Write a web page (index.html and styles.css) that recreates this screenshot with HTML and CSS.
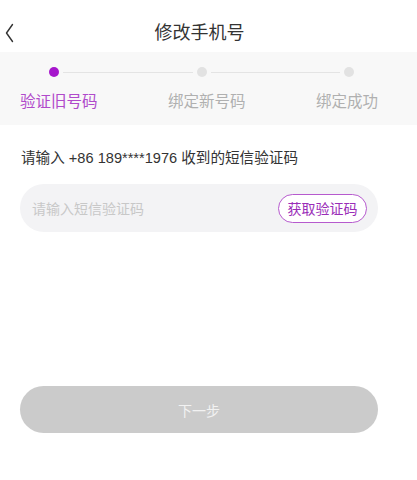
FILE: index.html
```html
<!DOCTYPE html>
<html lang="zh">
<head>
<meta charset="utf-8">
<title>修改手机号</title>
<link rel="stylesheet" href="styles.css">
</head>
<body>
<div class="page">
  <header class="nav">
    <span class="back">
      <svg width="9" height="20" viewBox="0 0 9 20"><polyline points="7.5,1.5 1.5,10 7.5,18.5" fill="none" stroke="#333" stroke-width="1.4" stroke-linecap="round" stroke-linejoin="round"/></svg>
    </span>
    <h1 class="title">修改手机号</h1>
    <span class="nav-spacer"></span>
  </header>
  <section class="steps">
    <div class="dots">
      <span class="dot active"></span>
      <span class="line"></span>
      <span class="dot"></span>
      <span class="line"></span>
      <span class="dot"></span>
    </div>
    <div class="labels">
      <span class="label active">验证旧号码</span>
      <span class="label">绑定新号码</span>
      <span class="label">绑定成功</span>
    </div>
  </section>
  <main class="content">
    <p class="hint">请输入 +86 189****1976 收到的短信验证码</p>
    <div class="field">
      <span class="placeholder">请输入短信验证码</span>
      <button class="code-btn">获取验证码</button>
    </div>
    <button class="next">下一步</button>
  </main>
</div>
</body>
</html>
```
FILE: styles.css
```css
* { box-sizing: border-box; }
html, body { margin: 0; padding: 0; background: #fff; }
body {
  font-family: "Liberation Sans", "Noto Sans CJK SC", sans-serif;
  color: #333;
  width: 417px;
  height: 480px;
  overflow: hidden;
}
.nav {
  height: 52px;
  padding-top: 14px;
  display: grid;
  grid-template-columns: 60px 1fr 60px;
  align-items: center;
}
.back {
  display: flex;
  align-items: center;
  padding-left: 5px;
  height: 38px;
}
.title {
  margin: 0;
  text-align: center;
  font-size: 18px;
  font-weight: 400;
  color: #333;
  line-height: 38px;
  padding-right: 18px;
}
.steps {
  background: #f8f8f8;
  padding: 15px 0 13px;
}
.dots {
  display: flex;
  align-items: center;
  padding: 0 63px 0 49px;
  height: 10px;
}
.dot {
  width: 10px;
  height: 10px;
  border-radius: 50%;
  background: #e2e2e2;
  flex: none;
}
.dot.active { background: #a616cc; }
.line {
  flex: 1;
  height: 1px;
  background: #e4e4e4;
  margin: 0 4px;
}
.labels {
  margin-top: 15px;
  display: flex;
  justify-content: space-between;
  padding: 0 39px 0 20px;
  font-size: 15.5px;
  line-height: 20px;
  color: #b0b0b0;
}
.label.active { color: #b04acb; }
.content {
  padding: 23px 39px 0 20px;
}
.hint {
  margin: 0 0 0 1px;
  font-size: 14.6px;
  line-height: 20px;
  color: #333;
}
.field {
  margin-top: 16px;
  height: 48px;
  border-radius: 24px;
  background: #f3f3f5;
  display: flex;
  align-items: center;
  justify-content: space-between;
  padding: 0 11px 0 12px;
}
.placeholder {
  font-size: 14px;
  color: #c8c8c8;
}
.code-btn {
  height: 29px;
  width: 89px;
  border: 1.5px solid #b65ace;
  border-radius: 15px;
  background: #fff;
  color: #9a2db8;
  font-family: inherit;
  font-size: 14px;
  padding: 0;
}
.next {
  display: block;
  margin-top: 154px;
  width: 100%;
  height: 47px;
  border: none;
  border-radius: 24px;
  background: #cbcbcb;
  color: #f2f2f2;
  font-family: inherit;
  font-size: 14px;
}
```
